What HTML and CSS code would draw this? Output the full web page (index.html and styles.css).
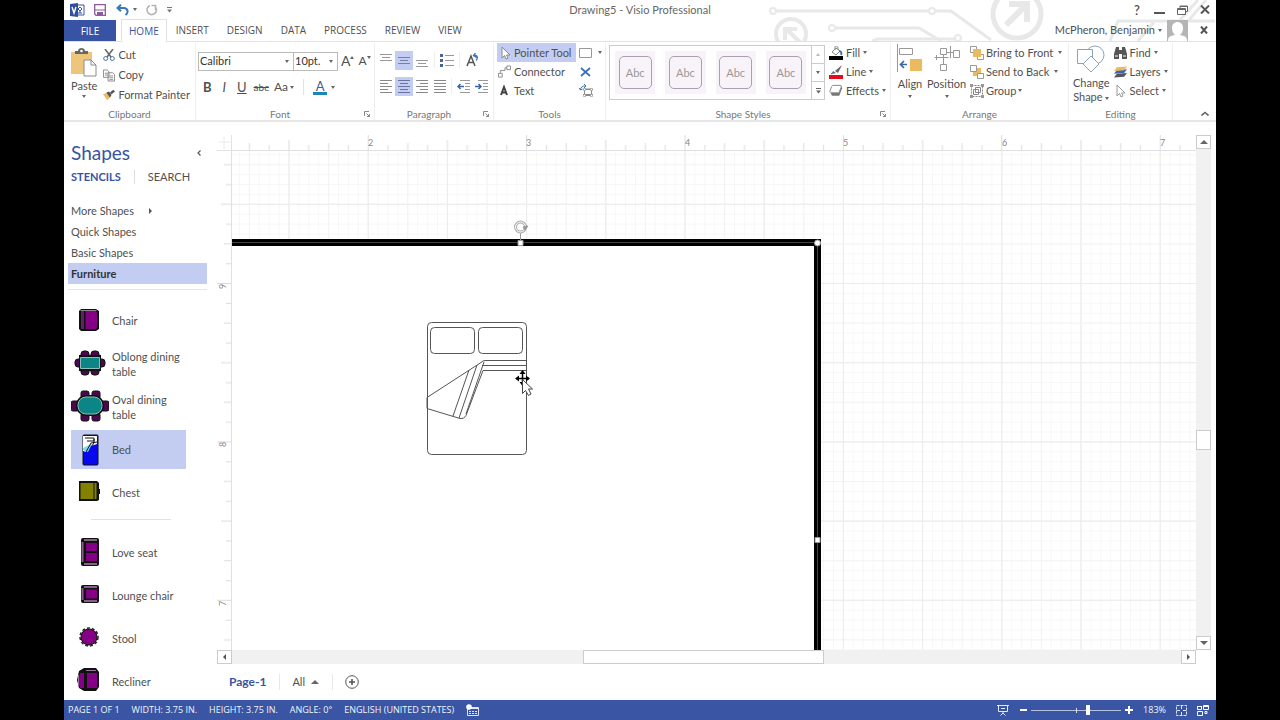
FILE: index.html
```html
<!DOCTYPE html>
<html lang="en">
<head>
<meta charset="utf-8">
<title>Drawing5 - Visio Professional</title>
<meta name="viewport" content="width=device-width, initial-scale=1">
<link rel="stylesheet" href="styles.css">
</head>
<body>
<div class="app">
  <header class="top">
    <svg class="circuit" width="476" height="41" viewBox="0 0 476 41" fill="none" stroke="#e8e8e8" stroke-width="3" aria-hidden="true">
      <path d="M36 11H189M195 11h16l40 29M95 28h84l22 13M132 41l6-2h77M370 41l8-20h97M398 41l16-19M440 20l18-20M449 20l17-20"/>
      <circle cx="33" cy="11" r="3" stroke-width="2"/><circle cx="192" cy="11" r="3" stroke-width="2"/><circle cx="92" cy="28" r="3" stroke-width="2"/><circle cx="218" cy="38" r="3" stroke-width="2"/>
      <circle cx="51" cy="34" r="15" stroke-width="4"/><path d="M60 42 46 29M45 40V29h12" stroke-width="4"/>
      <circle cx="277" cy="14" r="24" stroke-width="5"/><path d="m266 25 20-20M269 4h18v18" stroke-width="6"/>
    </svg>
    <div class="titlebar">
      <div class="quick">
        <svg width="16" height="14" viewBox="0 0 16 14" aria-hidden="true"><path d="M8 2h7v10H8z" fill="#fff" stroke="#3953a4"/><path d="m11 4 2 2-2 2-2-2zM9 10h4M11 8v2" fill="none" stroke="#3953a4"/><path d="M1 1 9 0v14l-8-1z" fill="#2f4f9f"/><path d="m3 4 2 6 2-6" fill="none" stroke="#fff" stroke-width="1.4"/></svg>
        <button class="icon-btn" aria-label="Save"><svg width="12" height="12" viewBox="0 0 12 12"><path d="M.7.7h10.6v10.6H2L.7 10z" fill="#fff" stroke="#8d5a9b" stroke-width="1.3"/><path d="M.7 6h10.6" stroke="#8d5a9b"/><path d="M3 8h6v3H3z" fill="#8d5a9b"/></svg></button>
        <button class="icon-btn undo" aria-label="Undo"><svg width="13" height="12" viewBox="0 0 13 12"><path d="M1.500 4h6c5 0 5 5 2 7M5 .8 1.500 4 5 7.200" fill="none" stroke="#3a76b8" stroke-width="2"/></svg><i class="caret"></i></button>
        <button class="icon-btn" aria-label="Redo"><svg width="12" height="12" viewBox="0 0 12 12"><path d="M4 1.500a4.700 4.700 0 1 0 5 1M9.500 6V1.500H5.500" fill="none" stroke="#b5b5b5" stroke-width="1.600"/></svg></button>
        <button class="icon-btn" aria-label="Customize Quick Access Toolbar"><svg width="5" height="6" viewBox="0 0 5 6"><path d="M0 .5h5" stroke="#777"/><path d="M0 2.500h5L2.500 5.500z" fill="#777"/></svg></button>
      </div>
      <h1 class="title">Drawing5 - Visio Professional</h1>
      <div class="window-buttons">
        <button class="icon-btn help" aria-label="Help">?</button>
        <button class="icon-btn" aria-label="Minimize"><svg width="11" height="10" viewBox="0 0 11 10"><path d="M0 8h11" stroke="#555" stroke-width="2"/></svg></button>
        <button class="icon-btn" aria-label="Restore"><svg width="11" height="10" viewBox="0 0 11 10" fill="none" stroke="#666"><path d="M3 3V1h7.500v5.500H8.500M.5 3.500h8v6h-8zM.5 4.500h8M3 1.500h7"/></svg></button>
        <button class="icon-btn" aria-label="Close"><svg width="10" height="9" viewBox="0 0 10 9"><path d="m1 .5 8 8M9 .5l-8 8" stroke="#555" stroke-width="2"/></svg></button>
      </div>
    </div>
    <nav class="tabs">
      <button class="tab file">FILE</button>
      <button class="tab active">HOME</button>
      <button class="tab">INSERT</button>
      <button class="tab">DESIGN</button>
      <button class="tab">DATA</button>
      <button class="tab">PROCESS</button>
      <button class="tab">REVIEW</button>
      <button class="tab">VIEW</button>
      <div class="account">
        <button class="btn">McPheron, Benjamin <i class="caret"></i></button>
        <svg width="21" height="21" viewBox="0 0 21 21" aria-hidden="true"><path d="M0 0h21v21H0z" fill="#b5b5b5"/><path d="M1 21c0-5 3-5 7-6-2-2-3-4-3-7 0-8 11-8 11 0 0 3-1 5-3 7 4 1 7 1 7 6z" fill="#fff"/></svg>
        <button class="icon-btn" aria-label="Close document"><svg width="8" height="8" viewBox="0 0 8 8"><path d="m1 .5 6 7M7 .5l-6 7" stroke="#555" stroke-width="2"/></svg></button>
      </div>
    </nav>
  </header>

  <section class="ribbon" aria-label="Home">
    <div class="group clipboard">
      <div class="group-body">
        <button class="big"><svg width="26" height="29" viewBox="0 0 26 29"><path d="M0 4h21v22H0z" fill="#edc57c"/><path d="M4 6V3h3c0-4 7-4 7 0h3v3z" fill="#666"/><circle cx="10.500" cy="3" r="1.300" fill="#fff"/><path d="M13 12h7l5 5v11H13z" fill="#fff" stroke="#8a8a8a"/><path d="M20 12v5h5" fill="none" stroke="#8a8a8a"/></svg><span>Paste</span><i class="caret"></i></button>
        <div class="rows">
          <button class="btn"><svg width="12" height="12" viewBox="0 0 12 12" fill="none"><path d="m2 0 6 8M10 0 4 8" stroke="#666" stroke-width="1.500"/><circle cx="2.700" cy="9.500" r="2" stroke="#47729f"/><circle cx="9.300" cy="9.500" r="2" stroke="#47729f"/></svg>Cut</button>
          <button class="btn"><svg width="12" height="13" viewBox="0 0 13 13" fill="#fff" stroke="#888"><path d="M.5.5h4l2 2v6h-6zM2 4h3M2 6h3M5.500 3.500h5l2 2v7h-7z"/><path d="M7 7h4M7 9h4M7 11h4"/></svg>Copy</button>
          <button class="btn"><svg width="12" height="12" viewBox="0 0 14 12"><path d="m0 5 5-2 4 5-4 4z" fill="#edb96b"/><path d="m4 3 3-1 3 4-2 3zM8 3l4-3 2 2-4 3z" fill="#555"/></svg>Format Painter</button>
        </div>
      </div>
      <div class="group-label"><span>Clipboard</span></div>
    </div>

    <div class="group font">
      <div class="group-body stack">
        <div class="line">
          <span class="combo"><select class="family" aria-label="Font"><option>Calibri</option></select><i class="caret"></i></span><span class="combo second"><select class="size" aria-label="Font size"><option>10pt.</option></select><i class="caret"></i></span>
          <button class="icon-btn glyph-a" aria-label="Grow font">A<i class="caret up"></i></button>
          <button class="icon-btn glyph-a small" aria-label="Shrink font">A<i class="caret"></i></button>
        </div>
        <div class="line format">
          <button class="icon-btn"><b>B</b></button>
          <button class="icon-btn"><em>I</em></button>
          <button class="icon-btn"><u>U</u></button>
          <button class="icon-btn strike"><s>abc</s></button>
          <button class="icon-btn case">Aa<i class="caret"></i></button>
          <i class="bar"></i>
          <button class="icon-btn"><span class="ink">A</span><i class="caret"></i></button>
        </div>
      </div>
      <div class="group-label"><span>Font</span><svg class="launch" width="6" height="6" viewBox="0 0 6 6"><path d="M.5 5V.5H5M2.500 2.500l3 3M5.500 3v2.500H3" fill="none" stroke="#888"/></svg></div>
    </div>

    <div class="group paragraph">
      <div class="group-body stack">
        <div class="line">
          <button class="sq" aria-label="Align top"><svg width="12" height="14" viewBox="0 0 12 14" stroke="#999"><path d="M0 1.500h12M2 4.500h8M0 7.500h12"/></svg></button>
          <button class="sq on" aria-label="Align middle"><svg width="12" height="14" viewBox="0 0 12 14" stroke="#7480a8"><path d="M0 4.500h12M2 7.500h8M0 10.500h12"/></svg></button>
          <button class="sq" aria-label="Align bottom"><svg width="12" height="14" viewBox="0 0 12 14" stroke="#999"><path d="M0 7.500h12M2 10.500h8M0 13.500h12"/></svg></button>
          <i class="bar faint"></i>
          <button class="sq" aria-label="Bullets"><svg width="14" height="13" viewBox="0 0 14 13"><path d="M0 0h3v3H0zM0 5h3v3H0zM0 10h3v3H0z" fill="#47639a"/><path d="M5 1.500h9M5 6.500h9M5 11.500h9" stroke="#999"/></svg></button>
          <i class="bar faint"></i>
          <button class="sq" aria-label="Rotate text"><svg width="13" height="14" viewBox="0 0 13 14" fill="none"><path d="m1 13 4-10 4 10M2.500 9.500h5" stroke="#555" stroke-width="1.500"/><path d="M8 2.500c4-1 4 3 2 5M9.500 0 7.500 2.500l3 2" stroke="#3a76b8" stroke-width="1.300"/></svg></button>
        </div>
        <div class="line">
          <button class="sq" aria-label="Align left"><svg width="12" height="13" viewBox="0 0 12 13" stroke="#888"><path d="M0 .5h12M0 3.500h8M0 6.500h12M0 9.500h8M0 12.500h12"/></svg></button>
          <button class="sq on" aria-label="Center"><svg width="12" height="13" viewBox="0 0 12 13" stroke="#6874a0"><path d="M0 .5h12M2 3.500h8M0 6.500h12M2 9.500h8M0 12.500h12"/></svg></button>
          <button class="sq" aria-label="Align right"><svg width="12" height="13" viewBox="0 0 12 13" stroke="#888"><path d="M0 .5h12M4 3.500h8M0 6.500h12M4 9.500h8M0 12.500h12"/></svg></button>
          <button class="sq" aria-label="Justify"><svg width="12" height="13" viewBox="0 0 12 13" stroke="#888"><path d="M0 .5h12M0 3.500h12M0 6.500h12M0 9.500h12M0 12.500h12"/></svg></button>
          <i class="bar narrow"></i>
          <button class="sq" aria-label="Decrease indent"><svg width="13" height="13" viewBox="0 0 13 13" fill="none"><path d="M3 .5h10M8 3.500h5M8 6.500h5M8 9.500h5M3 12.500h10" stroke="#999"/><path d="M7 6.500H1M3.500 4 1 6.500 3.500 9" stroke="#3a66a8" stroke-width="1.500"/></svg></button>
          <button class="sq" aria-label="Increase indent"><svg width="13" height="13" viewBox="0 0 13 13" fill="none"><path d="M3 .5h10M8 3.500h5M8 6.500h5M8 9.500h5M3 12.500h10" stroke="#999"/><path d="M0 6.500h6M3.500 4 6 6.500 3.500 9" stroke="#3a66a8" stroke-width="1.500"/></svg></button>
        </div>
      </div>
      <div class="group-label"><span>Paragraph</span><svg class="launch" width="6" height="6" viewBox="0 0 6 6"><path d="M.5 5V.5H5M2.500 2.500l3 3M5.500 3v2.500H3" fill="none" stroke="#888"/></svg></div>
    </div>

    <div class="group tools">
      <div class="group-body">
        <div class="rows tight">
          <button class="btn on"><svg width="13" height="14" viewBox="0 0 13 14"><path d="M4 1v11l2.500-2.500L8 13l2-1-1.500-3H12z" fill="#fff" stroke="#888"/></svg>Pointer Tool</button>
          <button class="btn"><svg width="13" height="13" viewBox="0 0 14 13" fill="none" stroke="#888"><path d="M.5 8.500h4v4h-4zM9.500.5h4v4h-4zM2.500 8V5.500h5v-3h2"/></svg>Connector</button>
          <button class="btn"><svg width="13" height="12" viewBox="0 0 13 12"><path d="m3 10 3-8 3 8M4 7.500h4" fill="none" stroke="#444" stroke-width="2"/></svg>Text</button>
        </div>
        <div class="rows tight">
          <button class="btn" aria-label="Rectangle"><svg width="13" height="10" viewBox="0 0 13 10"><path d="M.5.500h12v9H.5z" fill="#fff" stroke="#999"/></svg><i class="caret"></i></button>
          <button class="btn" aria-label="Connection point"><svg width="13" height="10" viewBox="0 0 13 10"><path d="m2 1 9 8M11 1 2 9" stroke="#3a70b5" stroke-width="1.700"/></svg></button>
          <button class="btn" aria-label="Text block"><svg width="14" height="13" viewBox="0 0 14 13" fill="none"><path d="M5.500 5v6.500h7V5zM4 5.500h10M4 10.500h10" stroke="#888"/><path d="M4.500 4.500h2v2h-2zM11.500 4.500h2v2h-2zM4.500 10.500h2v2h-2zM11.500 10.500h2v2h-2z" fill="#fff" stroke="#999" stroke-width=".7"/><path d="M1.500 6c0-3 2-4 5-4M0 4l1.500 2 2-1M5 0l2 2-2 2" stroke="#3a76b8"/></svg></button>
        </div>
      </div>
      <div class="group-label"><span>Tools</span></div>
    </div>

    <div class="group styles">
      <div class="group-body">
        <div class="gallery">
          <button class="swatch"><span>Abc</span></button>
          <button class="swatch"><span>Abc</span></button>
          <button class="swatch"><span>Abc</span></button>
          <button class="swatch"><span>Abc</span></button>
          <div class="gallery-nav">
            <button aria-label="Previous styles"><i class="caret up pale"></i></button>
            <button aria-label="Next styles"><i class="caret"></i></button>
            <button aria-label="More styles"><svg width="5" height="6" viewBox="0 0 5 6"><path d="M0 .5h5" stroke="#666"/><path d="M0 2.500h5L2.500 5.500z" fill="#666"/></svg></button>
          </div>
        </div>
        <div class="rows tight">
          <button class="btn"><svg width="14" height="14" viewBox="0 0 14 14"><path d="M0 10h14v4H0z" fill="#000"/><path d="m3 6 4-4 4 3-4 4zM6 4V1c0-2 3-1 3 1v2" fill="#fff" stroke="#888"/><path d="M10 5c2 0 3 2 2 4" stroke="#3a76b8" stroke-width="2" fill="none"/></svg>Fill<i class="caret"></i></button>
          <button class="btn"><svg width="14" height="14" viewBox="0 0 14 14"><path d="M0 10h14v4H0z" fill="#e30b1c"/><path d="m3 9 1-3 3 2zM6 6l7-6-4 8z" fill="#666"/><path d="m2 9 3-2" stroke="#3a76b8"/></svg>Line<i class="caret"></i></button>
          <button class="btn"><svg width="14" height="13" viewBox="0 0 15 13"><path d="M2 9 4 1l9 0 1 3-3 8H3z" fill="#777"/><path d="M4 1h8c1 0 1 1 1 2l-2 5c0 1-1 1-2 1H2C1 9 1 8 1 7l2-5z" fill="#fff" stroke="#888"/></svg>Effects<i class="caret"></i></button>
        </div>
      </div>
      <div class="group-label"><span>Shape Styles</span><svg class="launch" width="6" height="6" viewBox="0 0 6 6"><path d="M.5 5V.5H5M2.500 2.500l3 3M5.500 3v2.500H3" fill="none" stroke="#888"/></svg></div>
    </div>

    <div class="group arrange">
      <div class="group-body">
        <button class="big"><svg width="26" height="29" viewBox="0 0 26 29" fill="none"><path d="M.5 0v28M2.500 4.500h13v6h-13z" stroke="#999"/><path d="M13 15h12v12H13z" fill="#edb95f"/><path d="M10 20.500H4M7 17l-3.500 3.500L7 24" stroke="#3a66a8" stroke-width="1.700"/></svg><span>Align</span><i class="caret"></i></button>
        <button class="big"><svg width="28" height="29" viewBox="0 0 28 29" fill="none" stroke="#999"><path d="M7.500 4.500h6v6h-6zM20.500 6.500h6v7h-6zM7.500 20.500h6v6h-6zM1.500 13.500h14M10.500 11v9M14 8.500h6M17.500 2v12M3.500 11v5"/></svg><span>Position</span><i class="caret"></i></button>
        <div class="rows tight">
          <button class="btn"><svg width="14" height="14" viewBox="0 0 14 14" fill="#fff" stroke="#999"><path d="M.5.500h6v6h-6zM7.500 8.500h6v5h-6z"/><path d="M3 3h8v8H3z" fill="#edb95f" stroke="none"/></svg>Bring to Front<i class="caret wide"></i></button>
          <button class="btn"><svg width="14" height="14" viewBox="0 0 14 14" fill="#fff" stroke="#999"><path d="M3 3h8v8H3z" fill="#edb95f" stroke="none"/><path d="M.5.500h6v6h-6zM7.500 8.500h6v5h-6z"/></svg>Send to Back<i class="caret wide"></i></button>
          <button class="btn"><svg width="14" height="14" viewBox="0 0 14 14" fill="none" stroke="#888"><path d="M1.500 1.500h11v11h-11z" stroke-dasharray="2 1"/><path d="M3.500 5.500h5v5h-5zM5.500 3.500h5v5h-5z"/><path d="M0 0h3v3H0zM11 0h3v3h-3zM0 11h3v3H0zM11 11h3v3h-3z" fill="#999" stroke="none"/></svg>Group<i class="caret"></i></button>
        </div>
      </div>
      <div class="group-label"><span>Arrange</span></div>
    </div>

    <div class="group editing">
      <div class="group-body">
        <button class="big"><svg width="28" height="29" viewBox="0 0 28 29" fill="#fff" stroke="#8aa3b8"><circle cx="18" cy="10" r="9"/><path d="M.5 4.500h15v14H.5z"/><path d="m14 11 8 8-8 8-8-8z"/></svg><span>Change<br>Shape <i class="caret"></i></span></button>
        <div class="rows tight">
          <button class="btn"><svg width="13" height="12" viewBox="0 0 13 12" fill="#555"><path d="M2 0h3v3h3V0h3l2 7v5H8V7H5v5H0V7z"/><path d="M1 9h3M9 9h3" stroke="#fff"/></svg>Find<i class="caret"></i></button>
          <button class="btn"><svg width="13" height="12" viewBox="0 0 14 12"><path d="m3 8 11-1-3 4-11 1z" fill="#555"/><path d="m3 4 11-1-3 4-11 1z" fill="#3a66b8"/><path d="m3 1 11-1-3 4-11 1z" fill="#edb95f"/></svg>Layers<i class="caret"></i></button>
          <button class="btn"><svg width="13" height="14" viewBox="0 0 13 14"><path d="M3 1v11l2.500-2.500L7 13l2-1-1.500-3H11z" fill="#fff" stroke="#999"/></svg>Select<i class="caret"></i></button>
        </div>
      </div>
      <div class="group-label"><span>Editing</span></div>
    </div>
    <button class="icon-btn collapse" aria-label="Collapse the ribbon"><svg width="8" height="5" viewBox="0 0 8 5"><path d="m.5 4.500 3.500-3 3.500 3" fill="none" stroke="#666" stroke-width="1.600"/></svg></button>
  </section>

  <main class="work">
    <aside class="shapes">
      <div class="shapes-head"><h2>Shapes</h2><button class="icon-btn" aria-label="Minimize the Shapes window"><svg width="4" height="6" viewBox="0 0 4 6"><path d="M3.500.5 1 3l2.500 2.500" fill="none" stroke="#555" stroke-width="1.200"/></svg></button></div>
      <div class="shapes-tabs"><button class="on">STENCILS</button><button>SEARCH</button></div>
      <ul class="stencils">
        <li><button>More Shapes<i class="caret side"></i></button></li>
        <li><button>Quick Shapes</button></li>
        <li><button>Basic Shapes</button></li>
        <li><button class="on">Furniture</button></li>
      </ul>
      <ul class="masters">
        <li><button><svg width="38" height="34" viewBox="0 0 38 34"><path d="M10 5h15l3 2v18l-3 2H10l-2-2V7z" fill="#111"/><path d="M10 7h3v18h-3z" fill="#5c2460"/><path d="M14.500 7H25l1 2v14l-1 2H14.500z" fill="#840084"/><path d="M9.500 6.500h16" stroke="#888"/></svg><span>Chair</span></button></li>
        <li><button><svg width="38" height="34" viewBox="0 0 38 34"><g fill="#4c084e" stroke="#111"><rect x="10" y="4" width="8" height="8" rx="3"/><rect x="20" y="4" width="8" height="8" rx="3"/><rect x="10" y="20" width="8" height="8" rx="3"/><rect x="20" y="20" width="8" height="8" rx="3"/><rect x="4" y="12" width="7" height="8" rx="3"/><rect x="27" y="12" width="7" height="8" rx="3"/></g><path d="M9 9h20v14H9z" fill="#0b8585" stroke="#111" stroke-width="2"/><path d="M9.500 10.500h19v11h-19z" fill="none" stroke="#8cbdbd"/></svg><span>Oblong dining table</span></button></li>
        <li><button><svg width="38" height="34" viewBox="0 0 38 34"><g fill="#4c084e" stroke="#111"><rect x="10" y="1" width="8" height="8" rx="2"/><rect x="21" y="1" width="8" height="8" rx="2"/><rect x="10" y="23" width="8" height="8" rx="2"/><rect x="21" y="23" width="8" height="8" rx="2"/><rect x="0" y="11" width="8" height="10" rx="2"/><rect x="30" y="11" width="8" height="10" rx="2"/></g><rect x="6" y="6" width="26" height="19" rx="9" fill="#0b8585" stroke="#111" stroke-width="2"/><rect x="7" y="7" width="24" height="17" rx="8" fill="none" stroke="#8cbdbd"/></svg><span>Oval dining table</span></button></li>
        <li><button class="on"><svg width="38" height="34" viewBox="0 0 38 34"><rect x="12" y="2" width="15" height="30" rx="1" fill="#0808ef" stroke="#111"/><path d="M12 3h14v8l-6 2-5 6-3-1z" fill="#fff"/><path d="m12 15 6-3 3-1-4 8-5-2z" fill="#7cdbe8"/><path d="M14 5h9v3h-7M26 9l-6 1-5 9M23 6v4l-3 4" stroke="#111" fill="none"/></svg><span>Bed</span></button></li>
        <li><button><svg width="38" height="34" viewBox="0 0 38 34"><path d="M8 5h18l2 2v6h1v5h-1v6l-2 1H8z" fill="#111"/><path d="M9.500 7h13v16h-13z" fill="#828200"/><path d="M24.500 7v16" stroke="#828200" stroke-width="2"/></svg><span>Chest</span></button></li>
        <li class="rule" role="separator"></li>
        <li><button><svg width="38" height="34" viewBox="0 0 38 34"><rect x="10" y="2" width="18" height="28" rx="2" fill="#111"/><path d="M11.500 6v20M13 4h13M13 28h13" stroke="#876087" stroke-width="2"/><path d="M15 7h11v8H15zM15 17h11v8H15z" fill="#840084"/></svg><span>Love seat</span></button></li>
        <li><button><svg width="38" height="34" viewBox="0 0 38 34"><rect x="10" y="6" width="18" height="18" rx="2" fill="#111"/><path d="M11.500 9v12M13 8h13M13 22h13" stroke="#876087" stroke-width="2"/><path d="M15 10.500h11v9H15z" fill="#840084"/></svg><span>Lounge chair</span></button></li>
        <li><button><svg width="38" height="34" viewBox="0 0 38 34"><circle cx="18" cy="15" r="8" fill="#840084" stroke="#111"/><circle cx="18" cy="15" r="9" fill="none" stroke="#222" stroke-width="1.500" stroke-dasharray="3 2"/></svg><span>Stool</span></button></li>
        <li><button><svg width="38" height="34" viewBox="0 0 38 34"><path d="m8 6 5-3h12l3 4v15l-3 4H13l-5-3-2-8z" fill="#111"/><path d="M9 8h4v15H9l-2-6zM16 8h10v15H16z" fill="#840084"/><path d="M15 5.500h10M7.500 10v12" stroke="#987898" fill="none"/></svg><span>Recliner</span></button></li>
      </ul>
    </aside>

    <section class="editor" aria-label="Drawing page">
      <svg class="corner" width="15" height="16" viewBox="0 0 15 16"><path d="M2 7.500h12M7.500 2v13" stroke="#e6e6e6"/></svg>
      <svg class="ruler-x" width="100%" height="16">
        <defs><pattern id="tx" x="135.700" width="158.400" height="16" patternUnits="userSpaceOnUse"><path d="M.5 0v16M79.700 5v11M40.100 8v8M119.300 8v8M20.300 10v6M59.900 10v6M99.500 10v6M139.100 10v6" stroke="#dcdcdc"/></pattern></defs>
        <rect width="100%" height="16" fill="url(#tx)"/>
        <g class="ruler-text"><text x="136" y="11">2</text><text x="294" y="11">3</text><text x="453" y="11">4</text><text x="611" y="11">5</text><text x="770" y="11">6</text><text x="928" y="11">7</text></g>
      </svg>
      <svg class="ruler-y" width="15" height="100%">
        <defs><pattern id="ty" y="132" width="15" height="158.400" patternUnits="userSpaceOnUse"><path d="M0 .5h15M4 79.700h11M7 40.100h8M7 119.300h8M9 20.300h6M9 59.900h6M9 99.500h6M9 139.100h6" stroke="#dcdcdc"/></pattern></defs>
        <rect width="15" height="100%" fill="url(#ty)"/>
        <g class="ruler-text"><text transform="translate(9 138) rotate(-90)">9</text><text transform="translate(9 296) rotate(-90)">8</text><text transform="translate(9 455) rotate(-90)">7</text></g>
      </svg>
      <svg class="canvas" width="100%" height="100%">
        <defs>
          <pattern id="g1" x="135.700" y="132" width="9.900" height="9.900" patternUnits="userSpaceOnUse"><path d="M0 .5h10M.5 0v10" stroke="#f7f7f7"/></pattern>
          <pattern id="g2" x="135.700" y="132" width="39.600" height="39.600" patternUnits="userSpaceOnUse"><path d="M0 .5h40M.5 0v40" stroke="#f4f4f4"/></pattern>
          <pattern id="g3" x="135.700" y="132" width="79.200" height="79.200" patternUnits="userSpaceOnUse"><path d="M0 .5h80M.5 0v80" stroke="#ececec"/></pattern>
        </defs>
        <rect width="100%" height="100%" fill="url(#g1)"/><rect width="100%" height="100%" fill="url(#g2)"/><rect width="100%" height="100%" fill="url(#g3)"/>
        <path d="M-10 91.500H585.500V900H-10" fill="#fff" stroke="#000" stroke-width="7"/>
        <path d="M-10 91.500H585.500V900" fill="none" stroke="#444" stroke-width="1"/>
        <g fill="none" stroke="#555">
          <rect x="195.500" y="171.500" width="99" height="132" rx="4" fill="#fff"/>
          <rect x="198.500" y="176.500" width="44" height="26" rx="4"/><rect x="246.500" y="176.500" width="44" height="26" rx="4"/>
          <path d="M294 209.500h-41q-2 0-4 2l-54 35v11l33 10q4 1 6-3l17-45h43M250 214.500h44M252 211l-18 52M245 214l-18 53M237 219l-16 46"/>
        </g>
        <g fill="#fff" stroke="#999"><path d="M288.500 82v7" fill="none"/><circle cx="288.500" cy="76" r="5" fill="none" stroke-width="3" stroke="#aaa"/><circle cx="288.500" cy="76" r="5" fill="none" stroke="#fff"/><path d="m291 76 5-1-3 4z" fill="#999"/><path d="M286 89.500h5v5h-5zM583 386.500h5v5h-5z"/><circle cx="585.500" cy="92" r="3"/></g>
        <path d="M285 227.500h12M290.500 221v13" stroke="#000" stroke-width="1.500"/><path d="m283 227.500 4-3v6zM298 227.500l-4-3v6zM290.500 219l3 4h-6zM290.500 235l3-4h-6z"/>
        <path d="M290.500 228.500v14l3-3 3 5 2.500-1.500-2.500-5h4z" fill="#fff" stroke="#444"/>
      </svg>
      <div class="scroll vertical"><button class="end" aria-label="Scroll up"><i class="caret up large"></i></button><div class="track"><div class="thumb"></div></div><button class="end" aria-label="Scroll down"><i class="caret large"></i></button></div>
      <div class="scroll horizontal"><button class="end" aria-label="Scroll left"><i class="caret back"></i></button><div class="track"><div class="thumb"></div></div><button class="end" aria-label="Scroll right"><i class="caret side"></i></button></div>
      <div class="pages">
        <button class="page on">Page-1</button><button class="page">All <i class="caret up large"></i></button><button class="page" aria-label="Insert page"><svg width="14" height="14" viewBox="0 0 14 14" fill="none" stroke="#555"><circle cx="7" cy="7" r="6.300"/><path d="M7 4v6M4 7h6" stroke-width="1.600"/></svg></button>
      </div>
    </section>
  </main>

  <footer class="status">
    <span>PAGE 1 OF 1</span><span>WIDTH: 3.75 IN.</span><span>HEIGHT: 3.75 IN.</span><span>ANGLE: 0°</span><span>ENGLISH (UNITED STATES)</span>
    <svg width="13" height="12" viewBox="0 0 13 12"><path d="M1.500 3.500h11v8h-11z" fill="none" stroke="#dfe5f5"/><path d="M3 4.500h9" stroke="#dfe5f5"/><path d="M3 7.500h2M6 7.500h2M9 7.500h2M3 9.500h2M6 9.500h2M9 9.500h2" stroke="#dfe5f5"/><circle cx="3" cy="3" r="2.800" fill="#fff"/></svg>
    <div class="zoom">
      <button class="icon-btn" aria-label="Presentation mode"><svg width="12" height="11" viewBox="0 0 12 11" fill="none" stroke="#e3e8f6"><path d="M0 .5h12M1.500 1v5.500h9V1M6 7v2M3.500 10.500 6 8l2.500 2.500M4 3.500h4"/></svg></button>
      <button class="icon-btn minus" aria-label="Zoom out"><svg width="8" height="8" viewBox="0 0 8 8"><path d="M0 4h7" stroke="#fff" stroke-width="2"/></svg></button>
      <input class="slider" type="range" min="0" max="100" value="64" aria-label="Zoom">
      <button class="icon-btn" aria-label="Zoom in"><svg width="8" height="8" viewBox="0 0 8 8"><path d="M0 4h8M4 0v8" stroke="#fff" stroke-width="2"/></svg></button>
      <button class="icon-btn level">183%</button>
      <button class="icon-btn fit" aria-label="Fit page to window"><svg width="11" height="11" viewBox="0 0 11 11" fill="none" stroke="#dfe5f5"><path d="M.5.5h10v10H.5z" stroke-dasharray="3 1"/><path d="M5.500 1v3M5.500 7v3M1 5.500h3M7 5.500h3"/></svg></button>
      <button class="icon-btn" aria-label="Switch windows"><svg width="12" height="11" viewBox="0 0 12 11" fill="none" stroke="#fff"><path d="M.5 1.500h4v3h-4zM6.500.5h5v4h-5zM.5 6.500h5v4h-5zM8 6.500h2v2H8zM0 1.500h5M6 1.500h6"/></svg></button>
    </div>
  </footer>
</div>
</body>
</html>
```
FILE: styles.css
```css
* { box-sizing: border-box; }
body { margin: 0; background: #000; color: #505050; font: 11px/14px Lato, "Open Sans", sans-serif; }
button { border: 0; margin: 0; padding: 0; background: none; color: inherit; font: inherit; white-space: nowrap; }
svg { display: block; flex: none; }
h1, h2, ul { margin: 0; padding: 0; font-weight: normal; list-style: none; }

.app { margin: 0 5%; height: 100vh; display: flex; flex-direction: column; background: #fff; overflow: hidden; }
.caret { display: inline-block; flex: none; width: 0; height: 0; border: 2px solid transparent; border-top: 3px solid #666; border-bottom: 0; vertical-align: middle; }
.caret.up { border-top: 0; border-bottom: 3px solid #666; }
.caret.pale { border-bottom-color: #bbb; }
.caret.large { border-width: 4px 4px 0; }
.caret.up.large { border-width: 0 4px 4px; }
.caret.side { border: 3px solid transparent; border-left: 3px solid #555; border-right: 0; }
.caret.back { border: 3px solid transparent; border-right: 3px solid #555; border-left: 0; }
.icon-btn { display: flex; align-items: center; justify-content: center; gap: 4px; }

.top { position: relative; flex: none; }
.circuit { position: absolute; top: 0; right: 0; }
.titlebar { position: relative; display: grid; grid-template-columns: 1fr auto 1fr; align-items: center; height: 19px; }
.quick { display: flex; align-items: center; gap: 9px; padding-left: 5px; }
.quick .undo { margin-left: 1px; }
.title { font-size: 11px; color: #666; }
.window-buttons { display: flex; justify-content: flex-end; align-items: center; gap: 12px; padding-right: 6px; }
.help { font-size: 13px; font-weight: 600; margin-right: 2px; }

.tabs { position: relative; display: flex; height: 23px; border-bottom: 1px solid #e2e2e2; }
.tab { padding: 0 9px; font: 10px/14px "Open Sans", sans-serif; }
.tab.file { width: 52px; background: #3953a4; color: #fff; margin: 1px 5px 0 0; }
.tab.active { padding: 0 7px; margin-bottom: -1px; border: 1px solid #e2e2e2; border-bottom: 0; background: #fff; color: #3953a4; }
.account { margin-left: auto; display: flex; align-items: center; gap: 5px; padding-right: 8px; }
.account > :last-child { margin-left: 7px; }

.ribbon { flex: none; display: flex; height: 80px; border-bottom: 2px solid #e6e6e6; padding: 1px 0 0; }
.group { display: flex; flex-direction: column; flex: none; border-right: 1px solid #eee; }
.group-body { flex: 1; display: flex; align-items: flex-start; }
.group-label { display: flex; align-items: center; justify-content: center; height: 12px; color: #777; font-size: 10px; }
.group-label span { flex: 1; text-align: center; }
.launch { margin-right: 4px; }
.rows { display: flex; flex-direction: column; }
.rows .btn { height: 20px; }
.rows.tight .btn { height: 19px; }
.btn { display: flex; align-items: center; gap: 3px; }
.on { background: #c3cdf1; }
.big { display: flex; flex-direction: column; align-items: center; gap: 4px; line-height: 14px; }
.line { display: flex; align-items: center; height: 26px; }
.stack { flex-direction: column; }

.clipboard { width: 132px; }
.clipboard .group-body { padding: 2px 0 0 7px; gap: 6px; }
.clipboard .big { padding-top: 3px; gap: 2px; }
.font { width: 179px; }
.font .group-body { padding: 5px 0 0 2px; }
.combo { display: flex; align-items: center; height: 19px; border: 1px solid #bbb; padding-right: 4px; }
.combo.second { border-left: 0; }
.combo select { appearance: none; border: 0; background: none; padding: 0 0 0 1px; color: #333; font: inherit; }
.family { width: 86px; }
.size { width: 35px; }
.glyph-a { font-size: 14px; margin-left: 3px; gap: 0; }
.glyph-a .caret { align-self: flex-start; margin-top: 2px; }
.glyph-a.small { font-size: 12px; margin-left: 4px; }
.format { gap: 11px; padding-left: 5px; font-size: 13px; }
.format .strike { margin: 0 -2px 0 -4px; font-size: 10px; }
.format .case { margin-left: -4px; gap: 2px; font-size: 12px; }
.format .bar { margin: 0 -2px; }
.ink { width: 14px; line-height: 12px; border-bottom: 3px solid #1c86b8; color: #3f5f8c; }
.bar { width: 1px; height: 16px; background: #e3e3e3; }
.bar.faint { background: #eee; margin: 0 3px; }
.bar.narrow { background: #eee; margin: 0 2px; }
.paragraph { width: 119px; }
.paragraph .group-body { padding: 4px 0 0 2px; }
.sq { display: flex; align-items: center; justify-content: center; width: 18px; height: 19px; }
.tools { width: 112px; }
.tools .group-body, .styles .group-body, .arrange .group-body { padding-left: 3px; }
.tools .rows:first-child { width: 79px; margin-right: 2px; }
.tools .btn { padding-left: 1px; }
.tools .caret { margin-left: 3px; }
.styles { width: 285px; }
.gallery { display: flex; width: 216px; height: 55px; border: 1px solid #ccc; margin: 2px 4px 0 0; }
.swatch { flex: 1; display: grid; place-items: center; background: #f8f2f9; border: 5px solid #fff; color: #999; font-size: 11px; }
.swatch span { display: grid; place-items: center; width: 33px; height: 33px; border: 1px solid #a9a0ae; border-radius: 5px; }
.gallery-nav { width: 13px; display: flex; flex-direction: column; border-left: 1px solid #ccc; }
.gallery-nav button { flex: 1; display: grid; place-items: center; }
.gallery-nav button + button { border-top: 1px solid #ccc; }
.arrange { width: 178px; }
.arrange .group-body { padding-left: 6px; gap: 4px; }
.arrange .big { padding-top: 1px; }
.arrange .rows .btn { gap: 2px; }
.editing { width: 104px; }
.editing .group-body { padding-left: 4px; gap: 4px; }
.editing .big { gap: 2px; padding-top: 2px; }
.wide { margin-left: 3px; }
.collapse { margin: auto 7px 0 auto; height: 14px; }

.work { flex: 1; min-height: 0; display: flex; }
.shapes { width: 153px; flex: none; overflow: hidden; padding-top: 19px; }
.shapes-head { display: flex; justify-content: space-between; align-items: center; height: 24px; padding: 0 16px 0 7px; }
.shapes-head h2 { font-size: 19px; line-height: 24px; color: #3953a4; }
.shapes-tabs { display: flex; height: 24px; padding-left: 7px; font-size: 11px; }
.shapes-tabs button { padding-right: 27px; }
.shapes-tabs .on { background: linear-gradient(#ddd, #ddd) right 13px center / 1px 14px no-repeat; color: #3953a4; font-weight: bold; }
.stencils { margin: 11px 10px 0 4px; padding-bottom: 5px; border-bottom: 1px solid #e6e6e6; }
.stencils button { display: flex; align-items: center; gap: 15px; width: 100%; height: 21px; padding-left: 3px; }
.stencils .on { font-weight: bold; color: #333; }
.masters { padding: 7px 0 0 7px; }
.masters button { display: flex; align-items: center; gap: 3px; width: 115px; height: 39px; margin: 2px 0; line-height: 15px; text-align: left; white-space: normal; }
.masters span { width: 72px; }
.masters li { height: 43px; padding-top: 2px; }
.masters .rule { width: 80px; height: 1px; margin: 7px 0 9px 20px; padding: 0; background: #e2e2e2; }

.editor { flex: 1; min-width: 0; padding: 13px 5px 0 0; display: grid; grid-template: 16px minmax(0, 1fr) 14px 36px / 15px minmax(0, 1fr) 15px; }
.corner { border: solid #e2e2e2; border-width: 0 1px 1px 0; }
.ruler-x { border-bottom: 1px solid #e0e0e0; }
.ruler-y { grid-area: 2 / 1; border-right: 1px solid #e0e0e0; }
.ruler-text { font-size: 9px; fill: #888; }
.scroll { display: flex; background: #f1f1f1; }
.vertical { grid-area: 1 / 3 / 3 / 4; flex-direction: column; }
.canvas { grid-area: 2 / 2; overflow: hidden; }
.horizontal { grid-area: 3 / 1 / 4 / 3; }
.end { display: grid; place-items: center; flex: none; width: 15px; height: 14px; border: 1px solid #ccc; background: #fff; }
.track { flex: 1; display: flex; }
.vertical .track { flex-direction: column; }
.thumb { background: #fff; border: 1px solid #ccc; }
.vertical .thumb { height: 20px; margin-top: 281px; }
.horizontal .thumb { width: 241px; margin-left: 351px; }
.pages { grid-area: 4 / 1 / 5 / 4; display: flex; align-items: center; padding-left: 12px; }
.page { display: flex; align-items: center; gap: 6px; height: 16px; }
.page + .page { margin-left: 13px; padding-left: 12px; border-left: 1px solid #e8e8e8; }
.page.on { background: none; color: #3953a4; font-weight: bold; font-size: 12px; }

.status { flex: none; display: flex; align-items: center; gap: 12px; height: 20px; padding: 0 7px 0 4px; background: #3955a3; color: #f2f5fc; font: 9px/14px "Open Sans", sans-serif; white-space: nowrap; }
.zoom { display: flex; align-items: center; gap: 10px; margin-left: auto; }
.zoom .minus { margin-right: -7px; margin-left: 1px; }
.slider { appearance: none; width: 90px; height: 12px; margin: 0 -6px 0 0; background: linear-gradient(#d5dcf0, #d5dcf0) center / 1px 5px no-repeat, linear-gradient(#b5c0e0, #b5c0e0) center / 100% 1px no-repeat; }
.slider::-webkit-slider-thumb { appearance: none; width: 4px; height: 10px; background: #fff; }
```
